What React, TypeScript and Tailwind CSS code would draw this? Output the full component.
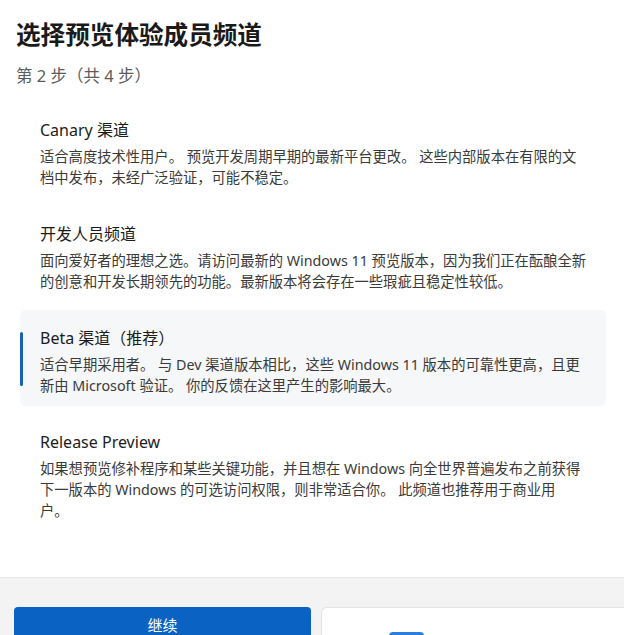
import React from 'react';

type Channel = {
  title: string;
  lines: string[];
  selected?: boolean;
};

const channels: Channel[] = [
  {
    title: 'Canary 渠道',
    lines: [
      '适合高度技术性用户。 预览开发周期早期的最新平台更改。 这些内部版本在有限的文',
      '档中发布，未经广泛验证，可能不稳定。',
    ],
  },
  {
    title: '开发人员频道',
    lines: [
      '面向爱好者的理想之选。请访问最新的 Windows 11 预览版本，因为我们正在酝酿全新',
      '的创意和开发长期领先的功能。最新版本将会存在一些瑕疵且稳定性较低。',
    ],
  },
  {
    title: 'Beta 渠道（推荐）',
    lines: [
      '适合早期采用者。 与 Dev 渠道版本相比，这些 Windows 11 版本的可靠性更高，且更',
      '新由 Microsoft 验证。 你的反馈在这里产生的影响最大。',
    ],
    selected: true,
  },
  {
    title: 'Release Preview',
    lines: [
      '如果想预览修补程序和某些关键功能，并且想在 Windows 向全世界普遍发布之前获得',
      '下一版本的 Windows 的可选访问权限，则非常适合你。 此频道也推荐用于商业用',
      '户。',
    ],
  },
];

const ChannelCard: React.FC<{ channel: Channel }> = ({ channel }) => (
  <div
    className={`relative rounded-md pl-5 pr-4 pt-4 pb-[10px] ${
      channel.selected ? 'bg-[#f6f7f9]' : ''
    }`}
  >
    {channel.selected && (
      <span className="absolute left-0 top-[22px] h-[54px] w-[3px] rounded-full bg-[#1b5fb0]" />
    )}
    <div className="text-[16px] leading-[24px] text-[#1c1c1c]">{channel.title}</div>
    <div className="mt-1 text-[14.3px] leading-[21px] text-[#3a3a3a]">
      {channel.lines.map((line, i) => (
        <div key={i} className="whitespace-nowrap">
          {line}
        </div>
      ))}
    </div>
  </div>
);

export default function App() {
  return (
    <div
      className="flex h-[635px] w-[624px] flex-col overflow-hidden bg-white"
      style={{ fontFamily: '"Noto Sans", "Noto Sans CJK SC", sans-serif' }}
    >
      <div className="px-4 pt-[18px]">
        <h1 className="text-[24.6px] font-semibold leading-[34px] text-[#1a1a1a]">
          选择预览体验成员频道
        </h1>
        <p className="mt-[13px] text-[16.5px] leading-[22px] text-[#5c5c5c]">第 2 步（共 4 步）</p>
      </div>

      <div className="ml-5 mr-[18px] mt-[15px] flex flex-col gap-2">
        {channels.map((c) => (
          <ChannelCard key={c.title} channel={c} />
        ))}
      </div>

      <div className="flex-1" />

      <div className="flex h-[58px] items-start border-t border-[#e6e6e6] bg-[#f3f3f3] pl-[14px] pt-[29px]">
        <button className="h-[36px] w-[297px] rounded-[4px] bg-[#0a62c2] text-[15px] leading-[36px] text-white">
          继续
        </button>
        <div className="relative ml-[10px] h-[40px] flex-1 rounded-tl-md border-l border-t border-[#e3e3e3] bg-white">
          <span className="absolute left-[67px] top-[24px] h-[20px] w-[35px] rounded-t-[4px] bg-[#2a7fdc]" />
        </div>
      </div>
    </div>
  );
}
